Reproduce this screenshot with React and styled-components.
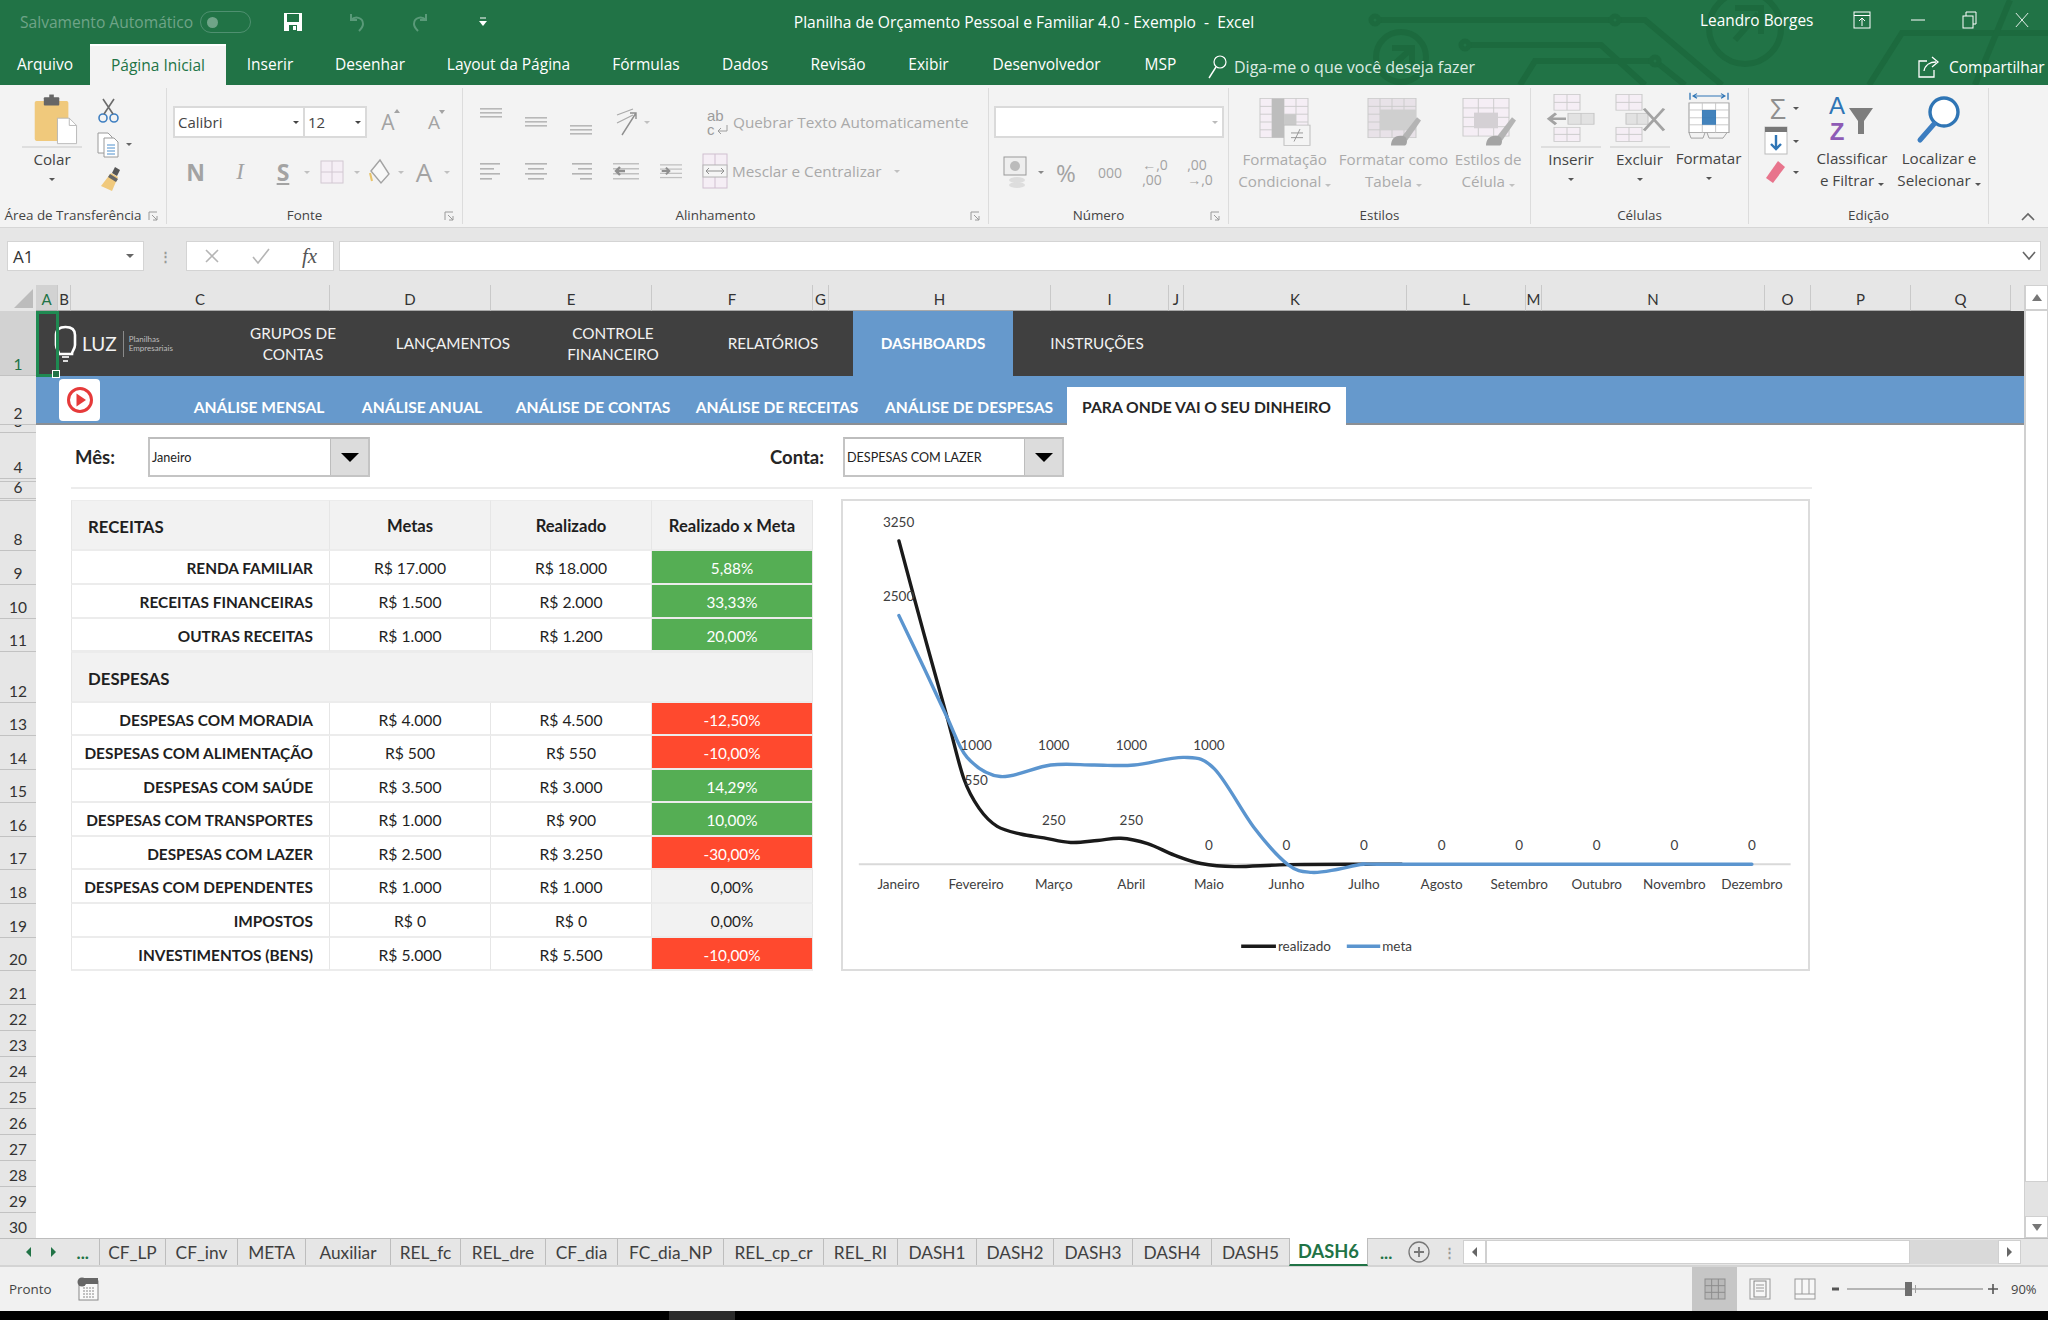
import React from 'react';
import styled, { createGlobalStyle } from 'styled-components';

const GlobalStyle = createGlobalStyle`
  html, body { margin: 0; padding: 0; background: #fff; }
  * { box-sizing: border-box; }
`;

const uiFont = `"Open Sans", "Noto Sans", sans-serif`;
const cellFont = `Lato, "Open Sans", sans-serif`;

const Page = styled.div`
  width: 2048px;
  height: 1320px;
  display: flex;
  flex-direction: column;
  overflow: hidden;
  font-family: ${uiFont};
`;

/* title bar */
const Header = styled.div`
  position: relative;
  background: #217346;
  color: #fff;
`;
const TitleBar = styled.div`
  position: relative;
  height: 44px;
  display: flex;
  align-items: center;
  font-size: 15.6px;
`;
const Circuit = styled.svg`
  position: absolute;
  left: 0;
  top: 0;
  pointer-events: none;
`;
const AutoSave = styled.span`
  margin-left: 20px;
  width: 180px;
  color: #6fa488;
  white-space: nowrap;
`;
const Toggle = styled.span`
  width: 51px;
  height: 22px;
  border: 1.5px solid #4f9070;
  border-radius: 11px;
  display: flex;
  align-items: center;
  padding-left: 6px;
  &::before {
    content: '';
    width: 11px;
    height: 11px;
    border-radius: 50%;
    background: #6fa488;
  }
`;
const QuickSlot = styled.span`
  position: relative;
  width: ${p => p.$w}px;
  margin-left: ${p => p.$ml || 0}px;
  display: flex;
  justify-content: center;
  align-items: center;
`;
const DocTitle = styled.span`
  position: absolute;
  left: 0;
  right: 0;
  top: 11px;
  text-align: center;
  white-space: pre;
`;
const TitleRight = styled.div`
  position: absolute;
  left: 1700px;
  top: 0;
  height: 40px;
  display: flex;
  align-items: center;
  font-size: 15.4px;
`;

/* ribbon tabs */
const TabBar = styled.div`
  position: relative;
  height: 41px;
  display: flex;
  align-items: flex-end;
  font-size: 15.5px;
`;
const RibbonTab = styled.div`
  width: ${p => p.$w}px;
  height: 41px;
  padding-bottom: 2px;
  display: flex;
  align-items: center;
  justify-content: center;
  white-space: nowrap;
  ${p => p.$active && `
    background: #f3f3f3;
    color: #217346;
    border-top: 2px solid #fff;
  `}
`;
const TellMe = styled.div`
  display: flex;
  align-items: center;
  gap: 7px;
  margin-left: 9px;
  color: #dcebe3;
  white-space: nowrap;
  padding-top: 4px;
  height: 41px;
  font-size: 16px;
`;
const Share = styled.div`
  position: absolute;
  left: 1917px;
  top: 0;
  height: 41px;
  display: flex;
  align-items: center;
  gap: 8px;
  padding-top: 4px;
  white-space: nowrap;
`;

/* ribbon */
const Ribbon = styled.div`
  position: relative;
  height: 143px;
  background: #f3f3f3;
  border-bottom: 1px solid #d6d6d6;
  display: flex;
  font-size: 15.2px;
`;
const RibbonGroup = styled.div`
  width: ${p => p.$w}px;
  display: flex;
  flex-direction: column;
  margin-top: 3px;
  margin-bottom: 3px;
  border-right: 1px solid #dcdcdc;
`;
const GroupBody = styled.div`
  height: 116px;
  display: flex;
  flex-direction: ${p => (p.$col ? 'column' : 'row')};
  padding-left: ${p => p.$pl || 0}px;
`;
const GroupLabel = styled.div`
  position: relative;
  flex: 1;
  display: flex;
  align-items: center;
  justify-content: center;
  font-size: 13.4px;
  color: #444;
  white-space: nowrap;
  padding-top: 7px;
  padding-right: ${p => (p.$launcher ? 20 : 0)}px;
`;
const Launcher = styled.svg`
  position: absolute;
  right: 8px;
  bottom: 3px;
`;
const BigButton = styled.div`
  width: ${p => p.$w}px;
  margin-left: ${p => p.$ml || 0}px;
  display: flex;
  flex-direction: column;
  align-items: center;
  padding-top: ${p => p.$pt ?? 5}px;
  color: ${p => (p.$off ? '#ababab' : '#444')};
  line-height: 22px;
  text-align: center;
  white-space: nowrap;
`;
const BigIcon = styled.div`
  height: ${p => p.$h}px;
  flex: none;
  padding-top: ${p => p.$pt || 0}px;
  display: flex;
  align-items: flex-start;
  justify-content: center;
  ${p => p.$line && `
    width: 60px;
    border-bottom: 2px solid #dedede;
  `}
`;
const SmallCol = styled.div`
  width: ${p => p.$w}px;
  margin-left: ${p => p.$ml || 0}px;
  display: flex;
  flex-direction: column;
  align-items: center;
  justify-content: space-between;
  padding: ${p => p.$pad || '8px 0 8px'};
`;
const ToolRow = styled.div`
  display: flex;
  align-items: center;
  height: ${p => p.$h}px;
  margin-top: ${p => p.$mt || 0}px;
  margin-left: ${p => p.$ml || 0}px;
`;
const Slot = styled.div`
  width: ${p => p.$w}px;
  flex: none;
  display: flex;
  align-items: center;
  justify-content: center;
  color: ${p => p.$color || '#a3a3a3'};
  font-family: ${p => (p.$serif ? '"Liberation Serif", serif' : uiFont)};
  font-weight: ${p => (p.$bold ? 700 : 400)};
  font-style: ${p => (p.$italic ? 'italic' : 'normal')};
  font-size: ${p => p.$fs || 14}px;
  text-decoration: ${p => (p.$under ? 'underline' : 'none')};
  line-height: ${p => p.$lh || 'normal'};
`;
const FontStep = styled.span`
  position: relative;
  &::after {
    content: '';
    position: absolute;
    right: -5px;
    top: 1px;
    border-left: 3px solid transparent;
    border-right: 3px solid transparent;
    ${p => (p.$down ? 'border-top: 4px solid #a3a3a3;' : 'border-bottom: 4px solid #a3a3a3;')}
  }
`;
const Combo = styled.div`
  width: ${p => p.$w}px;
  height: 32px;
  background: #fff;
  border: 2px solid #dadada;
  margin-right: -2px;
  display: flex;
  align-items: center;
  justify-content: space-between;
  padding: 0 4px 0 3px;
  color: #444;
  font-size: 15px;
`;
const Caret = styled.span`
  display: inline-block;
  width: 0;
  height: 0;
  border-left: ${p => p.$s || 3}px solid transparent;
  border-right: ${p => p.$s || 3}px solid transparent;
  border-top: ${p => p.$s || 3}px solid ${p => p.$color || '#666'};
  margin-left: ${p => p.$ml || 0}px;
`;
const ButtonCaret = styled(Caret)`
  margin-top: 8px;
`;
const MutedText = styled.span`
  color: #a9a9a9;
  white-space: nowrap;
  margin-left: ${p => p.$ml || 0}px;
  font-size: 15.3px;
`;
const Collapse = styled.svg`
  position: absolute;
  left: 2021px;
  top: 127px;
`;

/* formula bar */
const FormulaBar = styled.div`
  height: 58px;
  background: #e6e6e6;
  display: flex;
  align-items: center;
  padding: 0 7px;
  padding-bottom: 1px;
`;
const NameBox = styled.div`
  width: 137px;
  height: 30px;
  background: #fff;
  border: 1px solid #d4d4d4;
  display: flex;
  align-items: center;
  justify-content: space-between;
  padding: 0 9px 0 5px;
  font-size: 17px;
  color: #333;
`;
const Grip = styled.div`
  width: ${p => p.$w || 42}px;
  display: flex;
  justify-content: center;
  color: #999;
  font-weight: 700;
  font-size: 13px;
`;
const FxBox = styled.div`
  width: 148px;
  height: 30px;
  background: #fff;
  border: 1px solid #d4d4d4;
  display: flex;
  align-items: center;
  margin-right: 5px;
`;
const FormulaInput = styled.div`
  flex: 1;
  height: 30px;
  background: #fff;
  border: 1px solid #d4d4d4;
  display: flex;
  align-items: center;
  justify-content: flex-end;
  padding-right: 3px;
`;

/* sheet */
const Sheet = styled.div`
  height: 953px;
  display: flex;
  background: #e6e6e6;
`;
const SheetMain = styled.div`
  width: 2024px;
  display: flex;
  flex-direction: column;
`;
const ColHeaders = styled.div`
  height: 26px;
  display: flex;
  background: #e6e6e6;
`;
const Corner = styled.div`
  width: 36px;
  height: 26px;
  position: relative;
  &::after {
    content: '';
    position: absolute;
    right: 3px;
    bottom: 3px;
    border-style: solid;
    border-width: 0 0 19px 19px;
    border-color: transparent transparent #bcbcbc transparent;
  }
`;
const ColHead = styled.div`
  width: ${p => p.$w}px;
  border-right: 1px solid #c9c9c9;
  border-bottom: 1px solid #a9a9a9;
  display: flex;
  align-items: flex-end;
  justify-content: center;
  font-family: ${cellFont};
  font-size: 15px;
  line-height: 22px;
  overflow: hidden;
  color: ${p => (p.$sel ? '#217346' : '#333')};
  background: ${p => (p.$sel ? '#d2d2d2' : '#e6e6e6')};
`;
const SheetBody = styled.div`
  flex: 1;
  display: flex;
  min-height: 0;
`;
const RowHeaders = styled.div`
  width: 36px;
  display: flex;
  flex-direction: column;
`;
const RowHead = styled.div`
  height: ${p => p.$h}px;
  flex: none;
  border-bottom: 1px solid #c2c2c2;
  display: flex;
  align-items: flex-end;
  justify-content: center;
  overflow: hidden;
  font-family: ${cellFont};
  font-size: 15.5px;
  line-height: 22px;
  color: ${p => (p.$sel ? '#217346' : '#333')};
  background: ${p => (p.$sel ? '#d2d2d2' : '#e6e6e6')};
`;
const Canvas = styled.div`
  position: relative;
  flex: 1;
  background: #fff;
  display: flex;
  flex-direction: column;
  font-family: ${cellFont};
  overflow: hidden;
`;
const SelectedCell = styled.div`
  position: absolute;
  left: 0;
  top: 0;
  width: 23px;
  height: 66px;
  border: 3px solid #1f8a52;
  z-index: 3;
  &::after {
    content: '';
    position: absolute;
    right: -4px;
    bottom: -4px;
    width: 6px;
    height: 6px;
    background: #217346;
    border: 1px solid #fff;
  }
`;

/* app nav */
const NavBar = styled.div`
  height: 65px;
  flex: none;
  background: #404040;
  display: flex;
  color: #f2f2f2;
`;
const Logo = styled.div`
  width: 177px;
  display: flex;
  align-items: center;
  padding-left: 17px;
`;
const LogoName = styled.span`
  font-size: 19px;
  margin-left: 4px;
  padding-right: 6px;
  border-right: 1px solid #8a8a8a;
  line-height: 26px;
`;
const LogoSub = styled.span`
  font-size: 8px;
  line-height: 9px;
  margin-left: 5px;
  color: #bdbdbd;
`;
const NavItem = styled.div`
  width: ${p => p.$w || 160}px;
  display: flex;
  align-items: center;
  justify-content: center;
  text-align: center;
  font-size: 15.3px;
  line-height: 21px;
  ${p => p.$active && `
    background: #6699cc;
    font-weight: 700;
    color: #fff;
  `}
`;
const SubNav = styled.div`
  height: 49px;
  flex: none;
  background: #6699cc;
  border-bottom: 2px solid #8b8f94;
  display: flex;
`;
const PlayButton = styled.div`
  width: 41px;
  height: 42px;
  margin: 3px 0 0 23px;
  background: #fff;
  border-radius: 4px;
  display: flex;
  align-items: center;
  justify-content: center;
`;
const SubItem = styled.div`
  width: ${p => p.$w}px;
  margin-left: ${p => p.$ml || 0}px;
  display: flex;
  align-items: center;
  justify-content: center;
  padding-top: 14px;
  font-size: 15.6px;
  font-weight: 700;
  color: #fff;
  white-space: nowrap;
`;
const SubTabActive = styled.div`
  width: 279px;
  height: 38px;
  margin-top: 11px;
  padding-top: 2px;
  background: #fff;
  color: #262626;
  font-size: 15.7px;
  font-weight: 700;
  display: flex;
  align-items: center;
  justify-content: center;
  white-space: nowrap;
`;

/* filter */
const FilterRow = styled.div`
  height: 64px;
  flex: none;
  width: 1741px;
  margin-left: 35px;
  border-bottom: 2px solid #ececec;
  display: flex;
  align-items: center;
  padding: 2px 0 0 4px;
`;
const FilterLabel = styled.span`
  width: ${p => p.$w}px;
  margin-left: ${p => p.$ml || 0}px;
  font-size: 18.5px;
  font-weight: 700;
  color: #262626;
`;
const Dropdown = styled.div`
  width: ${p => p.$w}px;
  height: 40px;
  border: 2px solid #c4c4c4;
  border-top-color: #bdbdbd;
  display: flex;
  align-items: stretch;
  background: #fff;
`;
const DropValue = styled.span`
  flex: 1;
  display: flex;
  align-items: center;
  padding-left: 2px;
  font-size: 12.6px;
  color: #222;
  white-space: nowrap;
`;
const DropButton = styled.span`
  width: 38px;
  background: #dcdcdc;
  border-left: 1px solid #bdbdbd;
  display: flex;
  align-items: center;
  justify-content: center;
`;

/* dashboard */
const Content = styled.div`
  display: flex;
  align-items: flex-start;
  margin: 11px 0 0 35px;
  gap: 28px;
`;
const ResultTable = styled.div`
  width: 742px;
  flex: none;
  display: grid;
  grid-template-columns: 259px 161px 161px 161px;
  grid-template-rows: 51px 34px 34px 33px 51px 33px 34px 33px 34px 33px 34px 34px 33px;
  font-size: 15.7px;
  color: #1f1f1f;
`;
const Cell = styled.div`
  display: flex;
  align-items: center;
  justify-content: center;
  padding-top: 2px;
  border-bottom: 2px solid #ececec;
  border-right: 1px solid #e6e6e6;
  white-space: nowrap;
`;
const HeadCell = styled(Cell)`
  background: #f2f2f2;
  font-weight: 700;
  font-size: 16.6px;
  border-top: 1px solid #ececec;
`;
const SectionCell = styled(HeadCell)`
  justify-content: flex-start;
  padding: 3px 0 0 16px;
  font-size: 16.8px;
  grid-column: span ${p => p.$span || 1};
  border-left: 1px solid #e6e6e6;
`;
const RowLabel = styled(Cell)`
  justify-content: flex-end;
  padding-right: 16px;
  font-weight: 700;
  font-size: 15.4px;
  border-left: 1px solid #e6e6e6;
`;
const statusBg = { up: '#55ae54', down: '#ff492e', flat: '#f2f2f2' };
const StatusCell = styled(Cell)`
  background: ${p => statusBg[p.$kind]};
  color: ${p => (p.$kind === 'flat' ? '#1f1f1f' : '#fff')};
  font-size: 15.3px;
`;
const ChartBox = styled.div`
  width: 969px;
  height: 472px;
  margin-top: -1px;
  flex: none;
  background: #fff;
  border: 2px solid #dcdcdc;
`;
const ChartText = styled.text`
  font-family: ${cellFont};
  font-size: 13.5px;
  fill: #404040;
  text-anchor: ${p => p.$anchor || 'middle'};
`;

/* vertical scrollbar */
const VScroll = styled.div`
  width: 24px;
  background: #e3e3e3;
  display: flex;
  flex-direction: column;
  border-left: 1px solid #d0d0d0;
`;
const ScrollBtn = styled.div`
  height: ${p => p.$h}px;
  flex: none;
  background: #fff;
  border: 1px solid #d0d0d0;
  display: flex;
  align-items: center;
  justify-content: center;
  ${p => p.$end && 'margin-top: auto;'}
`;
const ScrollArrow = styled.span`
  width: 0;
  height: 0;
  border-left: 5px solid transparent;
  border-right: 5px solid transparent;
  ${p => (p.$up ? 'border-bottom: 7px solid #777;' : 'border-top: 7px solid #777;')}
`;

/* sheet tabs */
const TabsRow = styled.div`
  height: 29px;
  background: #e6e6e6;
  border-top: 1px solid #bdbdbd;
  border-bottom: 2px solid #d4d4d4;
  display: flex;
  align-items: center;
  font-family: ${cellFont};
  font-size: 17.3px;
  color: #404040;
`;
const TabNav = styled.div`
  width: 99px;
  display: flex;
  align-items: center;
  justify-content: space-around;
  padding: 0 0 0 16px;
  color: #217346;
  font-weight: 700;
`;
const SheetTab = styled.div`
  width: ${p => p.$w}px;
  height: 26px;
  display: flex;
  align-items: center;
  justify-content: center;
  white-space: nowrap;
  border-left: 1px solid #bdbdbd;
  ${p => p.$active && `
    height: 28px;
    background: #fff;
    color: #217346;
    font-weight: 700;
    font-size: 18.3px;
    border-bottom: 2px solid #217346;
    border-left: 1px solid #bdbdbd;
    border-right: 1px solid #bdbdbd;
  `}
`;
const AddRow = styled.div`
  width: 95px;
  display: flex;
  align-items: center;
  color: #217346;
  font-weight: 700;
  padding-left: 12px;
  gap: 16px;
`;
const HScroll = styled.div`
  width: 558px;
  height: 24px;
  display: flex;
  background: #d9d9d9;
`;
const HBtn = styled.div`
  width: 23px;
  background: #fff;
  border: 1px solid #d0d0d0;
  display: flex;
  align-items: center;
  justify-content: center;
  ${p => p.$end && 'margin-left: auto;'}
`;
const HThumb = styled.div`
  width: 424px;
  background: #fff;
  border: 1px solid #d0d0d0;
`;
const SideArrow = styled.span`
  width: 0;
  height: 0;
  border-top: 5px solid transparent;
  border-bottom: 5px solid transparent;
  ${p => (p.$left
    ? `border-right: 5px solid ${p.$color || '#666'};`
    : `border-left: 5px solid ${p.$color || '#666'};`)}
`;

/* status bar */
const StatusBar = styled.div`
  height: 44px;
  background: #f1f1f1;
  display: flex;
  align-items: center;
  font-size: 13.4px;
  color: #444;
`;
const Ready = styled.span`
  margin-left: 9px;
  width: 68px;
`;
const ViewBtn = styled.div`
  width: 45px;
  height: 44px;
  display: flex;
  align-items: center;
  justify-content: center;
  background: ${p => (p.$active ? '#c6c6c6' : 'transparent')};
`;
const ViewGroup = styled.div`
  margin-left: auto;
  display: flex;
  align-items: center;
`;
const ZoomSlider = styled.div`
  position: relative;
  width: 136px;
  height: 2px;
  background: #b5b5b5;
  margin: 0 4px;
  &::before {
    content: '';
    position: absolute;
    left: 58px;
    top: -6px;
    width: 7px;
    height: 14px;
    background: #6e6e6e;
  }
  &::after {
    content: '';
    position: absolute;
    left: 68px;
    top: -3px;
    width: 1px;
    height: 8px;
    background: #a0a0a0;
  }
`;
const ZoomPct = styled.span`
  width: 29px;
  margin: 0 8px 0 12px;
  font-size: 13px;
  white-space: nowrap;
`;
const BottomBar = styled.div`
  height: 9px;
  background: #000;
  padding-left: 669px;
  &::before {
    content: '';
    display: block;
    width: 66px;
    height: 9px;
    background: #2b2b2b;
  }
`;

/* small drawings */
const Svg = ({ w, h, children, ...rest }) => (
  <svg width={w} height={h} viewBox={`0 0 ${w} ${h}`} fill="none" {...rest}>{children}</svg>
);

const gridIcon = (x, y, w, h, cols, rows, stroke = '#c9c9c9', fill = '#f5eef5') => {
  const lines = [];
  for (let i = 1; i < cols; i++) lines.push(<path key={`c${i}`} d={`M${x + (w / cols) * i} ${y}v${h}`} stroke={stroke} />);
  for (let i = 1; i < rows; i++) lines.push(<path key={`r${i}`} d={`M${x} ${y + (h / rows) * i}h${w}`} stroke={stroke} />);
  return (
    <g>
      <rect x={x} y={y} width={w} height={h} fill={fill} stroke={stroke} />
      {lines}
    </g>
  );
};

const AlignLines = ({ type = 'center', widths = [20, 20, 20, 20] }) => (
  <Svg w={22} h={18}>
    {widths.map((lw, i) => {
      const x = type === 'left' ? 0 : type === 'right' ? 22 - lw : (22 - lw) / 2;
      return <rect key={i} x={x} y={i * 5 + 1} width={lw} height={1.6} fill="#b4b4b4" />;
    })}
  </Svg>
);

const StackLines = ({ cy }) => (
  <Svg w={22} h={30}>
    {[-4, 0, 4].map(y => <rect key={y} x={0} y={cy + y} width={22} height={1.6} fill="#b8b8b8" />)}
  </Svg>
);

const Indent = ({ right }) => (
  <Svg w={26} h={18}>
    {[1, 6, 11, 16].map(y => <rect key={y} x={0} y={y} width={26} height={1.5} fill="#c0c0c0" />)}
    <path d={right ? 'M2 9h8M7 5l4 4-4 4' : 'M12 9H3M7 5L3 9l4 4'} stroke="#8f8f8f" strokeWidth="2.4" />
  </Svg>
);

const PasteIcon = () => (
  <Svg w={66} h={56} height={52}>
    <g transform="translate(12 0)">
      <rect x={2} y={7} width={37} height={44} rx={2} fill="#f0c97c" />
      <rect x={12} y={3} width={17} height={9} rx={1} fill="#666" />
      <rect x={18} y={0} width={5} height={6} fill="#666" />
      <path d="M27 26h13l8 8v20H27z" fill="#fff" stroke="#b5b5b5" />
      <path d="M40 26v8h8" stroke="#b5b5b5" />
    </g>
  </Svg>
);

const ScissorsIcon = () => (
  <Svg w={24} h={26}>
    <circle cx={6} cy={20} r={4} stroke="#3f7fc1" strokeWidth="1.6" />
    <circle cx={17} cy={20} r={4} stroke="#3f7fc1" strokeWidth="1.6" />
    <path d="M7 16L17 1M16 16L6 1" stroke="#6b6b6b" strokeWidth="1.6" />
  </Svg>
);

const CopyIcon = () => (
  <Svg w={24} h={26}>
    <path d="M2 1h10l4 4v16H2z" fill="#fff" stroke="#9a9a9a" />
    <path d="M8 6h10l4 4v15H8z" fill="#fff" stroke="#9a9a9a" />
    {[13, 16, 19, 22].map(y => <path key={y} d={`M11 ${y}h8`} stroke="#4f90cd" />)}
  </Svg>
);

const BrushIcon = () => (
  <Svg w={24} h={28}>
    <path d="M14 8l7 4-6 14-11-5z" fill="#f0c97c" />
    <path d="M15 8l3-6 5 3-3 6z" fill="#555" />
    <path d="M13 9l8 5-2 3-8-5z" fill="#666" />
  </Svg>
);

const CondFormatIcon = () => (
  <Svg w={54} h={64} height={50} preserveAspectRatio="none">
    {gridIcon(2, 2, 48, 50, 4, 5)}
    <rect x={14} y={2} width={12} height={50} fill="#bdbdbd" />
    <rect x={26} y={22} width={12} height={20} fill="#c9c9c9" />
    <rect x={26} y={36} width={26} height={26} fill="#f4f4f4" stroke="#bdbdbd" />
    <path d="M33 46h12M33 52h12M42 41l-6 16" stroke="#8f8f8f" />
  </Svg>
);

const TableFormatIcon = ({ small }) => (
  <Svg w={56} h={64} height={50} preserveAspectRatio="none">
    {small
      ? gridIcon(3, 2, 46, 48, 3, 4)
      : gridIcon(3, 2, 48, 50, 4, 5, '#c9c9c9', '#e8e2e8')}
    {small
      ? <rect x={14} y={20} width={24} height={20} fill="#d4d0d4" />
      : <rect x={15} y={16} width={36} height={26} fill="#cfcfcf" />}
    <path d="M52 26L36 52l6 4 14-26z" fill="#b4b4b4" />
    <path d="M26 62c0-8 4-14 12-12 6 2 4 12 2 12z" fill="#a4a4a4" />
  </Svg>
);

const InsertCells = () => (
  <Svg w={50} h={64} height={50} preserveAspectRatio="none">
    {gridIcon(8, 2, 26, 20, 2, 2)}
    {gridIcon(8, 44, 26, 18, 2, 2)}
    {gridIcon(22, 26, 26, 14, 2, 1, '#c4c4c4', '#e2e2e2')}
    <path d="M20 33H3M10 26l-7 7 7 7" stroke="#a3a3a3" strokeWidth="3.2" />
  </Svg>
);

const DeleteCells = () => (
  <Svg w={56} h={64} height={50} preserveAspectRatio="none">
    {gridIcon(4, 2, 26, 20, 2, 2)}
    {gridIcon(4, 44, 26, 18, 2, 2)}
    {gridIcon(14, 26, 22, 14, 2, 1, '#c4c4c4', '#e2e2e2')}
    <path d="M32 20l20 28M52 20L32 48" stroke="#a3a3a3" strokeWidth="3" />
  </Svg>
);

const FormatCells = () => (
  <Svg w={48} h={64} height={50} preserveAspectRatio="none">
    <path d="M5 1v9M43 1v9M8 5h32M12 2L8 5l4 3M36 2l4 3-4 3" stroke="#2f75b5" strokeWidth="1.3" />
    <rect x={4} y={14} width={40} height={38} fill="#fff" stroke="#9a9a9a" />
    {[17.3, 30.6].map(x => <path key={x} d={`M${x} 14v38`} stroke="#c4c4c4" />)}
    {[23, 33, 42].map(y => <path key={y} d={`M4 ${y}h40`} stroke="#c4c4c4" />)}
    <rect x={17} y={23} width={14} height={19} fill="#2f75b5" opacity="0.9" />
    <path d="M4 52l2 7h12l2-7M22 52l2 7h14l4-7" stroke="#9a9a9a" />
  </Svg>
);

const SortIcon = () => (
  <Svg w={50} h={50}>
    <text x={10} y={20} fontSize="24" fill="#2f75b5" fontFamily="Liberation Sans" textAnchor="middle">A</text>
    <text x={10} y={46} fontSize="24" fontWeight="700" fill="#8e5bb5" fontFamily="Liberation Sans" textAnchor="middle">Z</text>
    <path d="M22 14h24l-9 13v13h-6V27z" fill="#7d7d7d" />
  </Svg>
);

const FindIcon = () => (
  <Svg w={50} h={50}>
    <circle cx={30} cy={18} r={14} fill="#fff" stroke="#2f75b5" strokeWidth="3.4" />
    <path d="M20 30L6 46" stroke="#3b7dc0" strokeWidth="5" strokeLinecap="round" />
  </Svg>
);

const chartMapX = px => px / 1.496 - 43;
const chartMapY = py => py / 2.61 - 121;

const smoothPath = pts => {
  const p = pts.map(([x, y]) => [chartMapX(x), chartMapY(y)]);
  let d = `M${p[0][0]} ${p[0][1]}`;
  for (let i = 0; i < p.length - 1; i++) {
    const p0 = p[i - 1] || p[i];
    const p1 = p[i];
    const p2 = p[i + 1];
    const p3 = p[i + 2] || p2;
    const c1 = [p1[0] + (p2[0] - p0[0]) / 6, p1[1] + (p2[1] - p0[1]) / 6];
    const c2 = [p2[0] - (p3[0] - p1[0]) / 6, p2[1] - (p3[1] - p1[1]) / 6];
    d += ` C${c1[0]} ${c1[1]} ${c2[0]} ${c2[1]} ${p2[0]} ${p2[1]}`;
  }
  return d;
};

const realizadoLine = [[148, 420], [185, 660], [220, 880], [245, 1040], [268, 1118], [295, 1165], [330, 1185], [365, 1195], [405, 1207], [445, 1202], [480, 1196], [520, 1210], [560, 1240], [600, 1262], [650, 1270], [730, 1265], [843, 1264], [900, 1264]];
const metaLine = [[148, 615], [185, 750], [220, 880], [250, 985], [300, 1035], [375, 1005], [440, 1005], [500, 1005], [575, 985], [620, 1015], [680, 1170], [730, 1265], [765, 1285], [805, 1277], [843, 1264], [900, 1264], [1424, 1264]];

const months = ['Janeiro', 'Fevereiro', 'Março', 'Abril', 'Maio', 'Junho', 'Julho', 'Agosto', 'Setembro', 'Outubro', 'Novembro', 'Dezembro'];
const monthX = i => 147.5 + i * 116.05;

const valueLabels = [
  ['3250', 0, 371], ['2500', 0, 565], ['1000', 1, 953], ['1000', 2, 953], ['1000', 3, 953], ['1000', 4, 953],
  ['550', 1, 1045], ['250', 2, 1148], ['250', 3, 1148],
  ...[4, 5, 6, 7, 8, 9, 10, 11].map(i => ['0', i, 1213]),
];

const Chart = () => (
  <svg width="965" height="468" viewBox="0 0 965 468">
    <path d={`M${chartMapX(88)} ${chartMapY(1264)}H${chartMapX(1482)}`} stroke="#d9d9d9" strokeWidth="2" />
    <path d={smoothPath(realizadoLine)} stroke="#1a1a1a" strokeWidth="3.4" strokeLinecap="round" fill="none" />
    <path d={smoothPath(metaLine)} stroke="#5b95cf" strokeWidth="3.4" strokeLinecap="round" fill="none" />
    {valueLabels.map(([text, i, y], k) => (
      <ChartText key={k} x={chartMapX(monthX(i))} y={chartMapY(y) + 5}>{text}</ChartText>
    ))}
    {months.map((m, i) => (
      <ChartText key={m} x={chartMapX(monthX(i))} y={chartMapY(1315) + 5}>{m}</ChartText>
    ))}
    <path d={`M${chartMapX(660)} ${chartMapY(1478)}H${chartMapX(712)}`} stroke="#1a1a1a" strokeWidth="3.4" />
    <ChartText $anchor="start" x={chartMapX(715)} y={chartMapY(1478) + 5}>realizado</ChartText>
    <path d={`M${chartMapX(818)} ${chartMapY(1478)}H${chartMapX(868)}`} stroke="#5b95cf" strokeWidth="3.4" />
    <ChartText $anchor="start" x={chartMapX(871)} y={chartMapY(1478) + 5}>meta</ChartText>
  </svg>
);

const columns = [
  ['A', 22], ['B', 13], ['C', 259], ['D', 161], ['E', 161], ['F', 161], ['G', 16], ['H', 222], ['I', 118],
  ['J', 15], ['K', 223], ['L', 119], ['M', 16], ['N', 223], ['O', 46], ['P', 100], ['Q', 100],
];
const rowHeights = [
  65, 49, 8, 46, 3, 17, 2, 50, 34, 34, 33, 51, 33, 34, 33, 34, 33, 34, 34, 33, 34, 26, 26, 26, 26, 26, 26, 26, 26, 26,
];

const receitas = [
  ['RENDA FAMILIAR', 'R$ 17.000', 'R$ 18.000', '5,88%', 'up'],
  ['RECEITAS FINANCEIRAS', 'R$ 1.500', 'R$ 2.000', '33,33%', 'up'],
  ['OUTRAS RECEITAS', 'R$ 1.000', 'R$ 1.200', '20,00%', 'up'],
];
const despesas = [
  ['DESPESAS COM MORADIA', 'R$ 4.000', 'R$ 4.500', '-12,50%', 'down'],
  ['DESPESAS COM ALIMENTAÇÃO', 'R$ 500', 'R$ 550', '-10,00%', 'down'],
  ['DESPESAS COM SAÚDE', 'R$ 3.500', 'R$ 3.000', '14,29%', 'up'],
  ['DESPESAS COM TRANSPORTES', 'R$ 1.000', 'R$ 900', '10,00%', 'up'],
  ['DESPESAS COM LAZER', 'R$ 2.500', 'R$ 3.250', '-30,00%', 'down'],
  ['DESPESAS COM DEPENDENTES', 'R$ 1.000', 'R$ 1.000', '0,00%', 'flat'],
  ['IMPOSTOS', 'R$ 0', 'R$ 0', '0,00%', 'flat'],
  ['INVESTIMENTOS (BENS)', 'R$ 5.000', 'R$ 5.500', '-10,00%', 'down'],
];

const ribbonTabs = [
  ['Arquivo', 90], ['Página Inicial', 136], ['Inserir', 88], ['Desenhar', 112], ['Layout da Página', 165],
  ['Fórmulas', 110], ['Dados', 88], ['Revisão', 98], ['Exibir', 83], ['Desenvolvedor', 153], ['MSP', 75],
];
const sheetTabs = [
  ['CF_LP', 66], ['CF_inv', 72], ['META', 68], ['Auxiliar', 85], ['REL_fc', 70], ['REL_dre', 85], ['CF_dia', 72],
  ['FC_dia_NP', 106], ['REL_cp_cr', 100], ['REL_RI', 74], ['DASH1', 79], ['DASH2', 77], ['DASH3', 79], ['DASH4', 79], ['DASH5', 78],
];

const DataRows = ({ rows }) => rows.map(([name, meta, real, pct, kind]) => (
  <React.Fragment key={name}>
    <RowLabel>{name}</RowLabel>
    <Cell>{meta}</Cell>
    <Cell>{real}</Cell>
    <StatusCell $kind={kind}>{pct}</StatusCell>
  </React.Fragment>
));

const LauncherMark = () => (
  <Launcher width="10" height="10" viewBox="0 0 10 10" fill="none">
    <path d="M1 9V1h8M4 4l5 5M9 5v4H5" stroke="#9a9a9a" />
  </Launcher>
);

export default function App() {
  return (
    <Page>
      <GlobalStyle />
      <Header>
        <Circuit width="2048" height="85" viewBox="0 0 2048 85" fill="none">
          <g stroke="#1c6a3e" strokeWidth="6">
            <path d="M1375 20H1645L1722 85" />
            <path d="M1465 45H1601L1645 85" />
            <path d="M1520 85L1535 61H1655L1685 85" />
            <circle cx="1401" cy="57" r="25" />
            <path d="M1390 68L1410 50M1392 48h20v20" />
            <circle cx="1745" cy="28" r="36" />
            <path d="M1735 40L1758 14M1735 8h26v26" />
            <path d="M1869 85L1902 33H2048" />
            <path d="M1975 85L2010 0" />
          </g>
          <g fill="#217346" stroke="#1c6a3e" strokeWidth="5">
            <circle cx="1375" cy="20" r="4" />
            <circle cx="1615" cy="20" r="4" />
            <circle cx="1465" cy="45" r="4" />
            <circle cx="1655" cy="61" r="4" />
          </g>
        </Circuit>
        <TitleBar>
          <AutoSave>Salvamento Automático</AutoSave>
          <Toggle />
          <QuickSlot $w={84}>
            <Svg w={20} h={20}>
              <path d="M1 1h18v18H1z" fill="#fff" />
              <rect x={4} y={2} width={12} height={8} fill="#217346" />
              <rect x={6} y={13} width={8} height={6} fill="#217346" />
              <rect x={10} y={14} width={3} height={4} fill="#fff" />
            </Svg>
          </QuickSlot>
          <QuickSlot $w={43}>
            <Svg w={20} h={22}>
              <path d="M4 3v6h6M4 9c4-4 12-3 12 4 0 3-2 5-4 7" stroke="#5a9a79" strokeWidth="2" />
            </Svg>
          </QuickSlot>
          <QuickSlot $w={84}>
            <Svg w={20} h={22}>
              <path d="M16 3v6h-6M16 9c-4-4-12-3-12 4 0 3 2 5 4 7" stroke="#5a9a79" strokeWidth="2" />
            </Svg>
          </QuickSlot>
          <QuickSlot $w={42}>
            <Svg w={10} h={10}>
              <path d="M2 1h6" stroke="#fff" />
              <path d="M1 4h8L5 9z" fill="#fff" />
            </Svg>
          </QuickSlot>
          <DocTitle>Planilha de Orçamento Pessoal e Familiar 4.0 - Exemplo  -  Excel</DocTitle>
          <TitleRight>
            Leandro Borges
            <QuickSlot $w={98}>
              <Svg w={18} h={18}>
                <rect x={1} y={1} width={16} height={16} stroke="#fff" />
                <path d="M1 4.5h16M9 15V8M6 10l3-3 3 3" stroke="#fff" />
              </Svg>
            </QuickSlot>
            <QuickSlot $w={14}>
              <Svg w={14} h={14}><path d="M0 7h14" stroke="#fff" /></Svg>
            </QuickSlot>
            <QuickSlot $w={90}>
              <Svg w={16} h={18}>
                <rect x={1} y={5} width={10} height={12} stroke="#fff" />
                <path d="M4 5V1h10v12h-3" stroke="#fff" />
              </Svg>
            </QuickSlot>
            <QuickSlot $w={14}>
              <Svg w={16} h={18}><path d="M1 1l14 16M15 1L1 17" stroke="#fff" /></Svg>
            </QuickSlot>
          </TitleRight>
        </TitleBar>

        <TabBar>
          {ribbonTabs.map(([label, w], i) => (
            <RibbonTab key={label} $w={w} $active={i === 1}>{label}</RibbonTab>
          ))}
          <TellMe>
            <Svg w={20} h={24}>
              <circle cx={13} cy={7} r={6} stroke="#fff" strokeWidth="1.2" />
              <path d="M9 12L2 23" stroke="#fff" strokeWidth="1.4" />
            </Svg>
            Diga-me o que você deseja fazer
          </TellMe>
          <Share>
            <Svg w={24} h={24}>
              <path d="M10 6H2v16h15v-7" stroke="#fff" strokeWidth="1.3" />
              <path d="M7 16c1-6 6-9 12-9M15 2l6 5-6 5" stroke="#fff" strokeWidth="1.3" />
            </Svg>
            Compartilhar
          </Share>
        </TabBar>
      </Header>

      <Ribbon>
        <RibbonGroup $w={167}>
          <GroupBody>
            <BigButton $w={78} $ml={13} $pt={6}>
              <BigIcon $h={54} $line><PasteIcon /></BigIcon>
              Colar
              <ButtonCaret $color="#555" />
            </BigButton>
            <SmallCol $w={36} $pad="10px 0 6px">
              <ScissorsIcon />
              <ToolRow $h={30} $ml={10}><CopyIcon /><Caret $ml={6} /></ToolRow>
              <BrushIcon />
            </SmallCol>
          </GroupBody>
          <GroupLabel $launcher>
            Área de Transferência
            <LauncherMark />
          </GroupLabel>
        </RibbonGroup>

        <RibbonGroup $w={296}>
          <GroupBody $col $pl={6}>
            <ToolRow $h={32} $mt={18}>
              <Combo $w={132}>Calibri<Caret $color="#444" /></Combo>
              <Combo $w={64}>12<Caret $color="#444" /></Combo>
              <Slot $w={46} $fs={21}><FontStep>A</FontStep></Slot>
              <Slot $w={46} $fs={19}><FontStep $down>A</FontStep></Slot>
            </ToolRow>
            <ToolRow $h={40} $mt={14}>
              <Slot $w={45} $fs={23} $bold>N</Slot>
              <Slot $w={44} $fs={23} $italic $serif>I</Slot>
              <Slot $w={42} $fs={23} $bold $under>S</Slot>
              <Caret $color="#c0c0c0" />
              <Slot $w={44}>
                <Svg w={24} h={24}>{gridIcon(1, 1, 22, 22, 2, 2, '#d2c8d2')}</Svg>
              </Slot>
              <Caret $color="#c0c0c0" />
              <Slot $w={38}>
                <Svg w={24} h={30}>
                  <path d="M4 14L13 3l9 14-8 9z" stroke="#a3a3a3" strokeWidth="1.4" fill="#f8f8f8" />
                  <path d="M3 16l2 8" stroke="#e9c46a" strokeWidth="2" />
                </Svg>
              </Slot>
              <Caret $color="#c0c0c0" />
              <Slot $w={40} $fs={26}>A</Slot>
              <Caret $color="#c0c0c0" />
            </ToolRow>
          </GroupBody>
          <GroupLabel $launcher>Fonte<LauncherMark /></GroupLabel>
        </RibbonGroup>

        <RibbonGroup $w={526}>
          <GroupBody $col $pl={17}>
            <ToolRow $h={40} $mt={14}>
              <Slot $w={22}><StackLines cy={5} /></Slot>
              <Slot $w={68}><StackLines cy={14} /></Slot>
              <Slot $w={22}><StackLines cy={22} /></Slot>
              <Slot $w={80}>
                <Svg w={30} h={30}>
                  <path d="M3 8l16-6M3 16L19 8" stroke="#a9a9a9" strokeWidth="1.2" />
                  <path d="M8 28L22 6M16 6h6v6" stroke="#8f8f8f" strokeWidth="1.4" />
                </Svg>
                <Caret $color="#c0c0c0" />
              </Slot>
              <Slot $w={35} />
              <Svg w={22} h={30}>
                <text x={0} y={14} fontSize="15" fill="#9c9c9c" fontFamily="Liberation Sans">ab</text>
                <text x={0} y={28} fontSize="15" fill="#9c9c9c" fontFamily="Liberation Sans">c</text>
                <path d="M20 18v6H11M14 21l-3 3 3 3" stroke="#9c9c9c" />
              </Svg>
              <MutedText $ml={4}>Quebrar Texto Automaticamente</MutedText>
            </ToolRow>
            <ToolRow $h={34} $mt={12}>
              <Slot $w={22}><AlignLines type="left" widths={[20, 14, 20, 12]} /></Slot>
              <Slot $w={68}><AlignLines widths={[22, 16, 22, 16]} /></Slot>
              <Slot $w={22}><AlignLines type="right" widths={[20, 14, 20, 12]} /></Slot>
              <Slot $w={68}><Indent /></Slot>
              <Slot $w={22}><Indent right /></Slot>
              <Slot $w={20} />
              <Svg w={26} h={36}>
                {gridIcon(1, 1, 24, 34, 2, 3, '#d0bfd0')}
                <rect x={1} y={12} width={24} height={12} fill="#f5f5f5" stroke="#b5b5b5" />
                <path d="M4 18h18M7 15l-3 3 3 3M19 15l3 3-3 3" stroke="#8f8f8f" />
              </Svg>
              <MutedText $ml={4}>Mesclar e Centralizar</MutedText>
              <Caret $ml={12} $color="#c0c0c0" />
            </ToolRow>
          </GroupBody>
          <GroupLabel $launcher>Alinhamento<LauncherMark /></GroupLabel>
        </RibbonGroup>

        <RibbonGroup $w={240}>
          <GroupBody $col $pl={5}>
            <ToolRow $h={32} $mt={18}>
              <Combo $w={230}><span /><Caret $color="#bbb" /></Combo>
            </ToolRow>
            <ToolRow $h={40} $mt={14}>
              <Slot $w={44}>
                <Svg w={26} h={32}>
                  <rect x={1} y={1} width={22} height={18} fill="#eee" stroke="#999" />
                  <circle cx={12} cy={10} r={5} fill="#bbb" />
                  <ellipse cx={14} cy={24} rx={8} ry={3} fill="#ddd" />
                  <ellipse cx={14} cy={29} rx={8} ry={3} fill="#ddd" />
                </Svg>
              </Slot>
              <Caret $color="#888" />
              <Slot $w={44} $fs={24}>%</Slot>
              <Slot $w={44} $fs={14}>000</Slot>
              <Slot $w={46} $fs={14} $lh="15px">
                <span>←,0<br />,00</span>
              </Slot>
              <Slot $w={44} $fs={14} $lh="15px">
                <span>,00<br />→,0</span>
              </Slot>
            </ToolRow>
          </GroupBody>
          <GroupLabel $launcher>Número<LauncherMark /></GroupLabel>
        </RibbonGroup>

        <RibbonGroup $w={302}>
          <GroupBody>
            <BigButton $off $w={112}>
              <BigIcon $h={55} $pt={4}><CondFormatIcon /></BigIcon>
              Formatação
              <span>Condicional <Caret $color="#c0c0c0" /></span>
            </BigButton>
            <BigButton $off $w={106}>
              <BigIcon $h={55} $pt={4}><TableFormatIcon /></BigIcon>
              Formatar como
              <span>Tabela <Caret $color="#c0c0c0" /></span>
            </BigButton>
            <BigButton $off $w={84}>
              <BigIcon $h={55} $pt={4}><TableFormatIcon small /></BigIcon>
              Estilos de
              <span>Célula <Caret $color="#c0c0c0" /></span>
            </BigButton>
          </GroupBody>
          <GroupLabel>Estilos</GroupLabel>
        </RibbonGroup>

        <RibbonGroup $w={218}>
          <GroupBody $pl={6}>
            <BigButton $w={68}>
              <BigIcon $h={55} $line><InsertCells /></BigIcon>
              Inserir
              <ButtonCaret $color="#555" />
            </BigButton>
            <BigButton $w={69}>
              <BigIcon $h={55} $line><DeleteCells /></BigIcon>
              Excluir
              <ButtonCaret $color="#555" />
            </BigButton>
            <BigButton $w={69} $pt={4}>
              <BigIcon $h={55}><FormatCells /></BigIcon>
              Formatar
              <ButtonCaret $color="#555" />
            </BigButton>
          </GroupBody>
          <GroupLabel>Células</GroupLabel>
        </RibbonGroup>

        <RibbonGroup $w={240}>
          <GroupBody>
            <SmallCol $w={52} $ml={6} $pad="5px 0 14px">
              <ToolRow $h={30}>
                <Slot $w={30} $fs={28} $color="#8f8f8f">Σ</Slot>
                <Caret $color="#555" />
              </ToolRow>
              <ToolRow $h={30}>
                <Svg w={26} h={30}>
                  <rect x={2} y={1} width={22} height={27} fill="#fff" stroke="#bbb" />
                  <rect x={2} y={1} width={22} height={5} fill="#777" />
                  <path d="M13 9v14M8 18l5 5 5-5" stroke="#2f75b5" strokeWidth="2.4" />
                </Svg>
                <Caret $ml={4} $color="#555" />
              </ToolRow>
              <ToolRow $h={26}>
                <Svg w={26} h={24}>
                  <path d="M15 1l7 6-12 16-7-5z" fill="#e8748c" />
                </Svg>
                <Caret $ml={4} $color="#555" />
              </ToolRow>
            </SmallCol>
            <BigButton $w={90} $pt={6}>
              <BigIcon $h={53}><SortIcon /></BigIcon>
              Classificar
              <span>e Filtrar <Caret $color="#555" /></span>
            </BigButton>
            <BigButton $w={84} $pt={6}>
              <BigIcon $h={53}><FindIcon /></BigIcon>
              Localizar e
              <span>Selecionar <Caret $color="#555" /></span>
            </BigButton>
          </GroupBody>
          <GroupLabel>Edição</GroupLabel>
        </RibbonGroup>
        <Collapse width="14" height="10" viewBox="0 0 14 10" fill="none">
          <path d="M1 8l6-6 6 6" stroke="#666" strokeWidth="1.6" />
        </Collapse>
      </Ribbon>

      <FormulaBar>
        <NameBox>A1<Caret $s={4} $color="#666" /></NameBox>
        <Grip>⋮</Grip>
        <FxBox>
          <Slot $w={49}><Svg w={18} h={18}><path d="M3 3l12 12M15 3L3 15" stroke="#b5b5b5" strokeWidth="1.6" /></Svg></Slot>
          <Slot $w={49}><Svg w={20} h={18}><path d="M2 10l5 6L18 2" stroke="#b5b5b5" strokeWidth="1.6" /></Svg></Slot>
          <Slot $w={49} $fs={21} $serif $italic $color="#555">fx</Slot>
        </FxBox>
        <FormulaInput>
          <Svg w={16} h={12}><path d="M2 2l6 7 6-7" stroke="#666" strokeWidth="1.6" /></Svg>
        </FormulaInput>
      </FormulaBar>

      <Sheet>
        <SheetMain>
          <ColHeaders>
            <Corner />
            {columns.map(([name, w], i) => (
              <ColHead key={name} $w={w} $sel={i === 0}>{name}</ColHead>
            ))}
          </ColHeaders>
          <SheetBody>
            <RowHeaders>
              {rowHeights.map((h, i) => (
                <RowHead key={i} $h={h} $sel={i === 0}>{i + 1}</RowHead>
              ))}
            </RowHeaders>
            <Canvas>
              <SelectedCell />
              <NavBar>
                <Logo>
                  <Svg w={25} h={38}>
                    <path d="M3 10c0-5 3-8 9.500-8S22 5 22 10v10c0 4-3 6-3 9H6c0-3-3-5-3-9z" stroke="#fff" strokeWidth="2.6" />
                    <path d="M9 32h7M10 36h5" stroke="#ddd" strokeWidth="2" />
                  </Svg>
                  <LogoName>LUZ</LogoName>
                  <LogoSub>Planilhas<br />Empresariais</LogoSub>
                </Logo>
                <NavItem>GRUPOS DE<br />CONTAS</NavItem>
                <NavItem>LANÇAMENTOS</NavItem>
                <NavItem>CONTROLE<br />FINANCEIRO</NavItem>
                <NavItem>RELATÓRIOS</NavItem>
                <NavItem $active>DASHBOARDS</NavItem>
                <NavItem $w={168}>INSTRUÇÕES</NavItem>
              </NavBar>
              <SubNav>
                <PlayButton>
                  <Svg w={28} h={30}>
                    <circle cx={14} cy={15} r={11.5} stroke="#e63a3a" strokeWidth="3" />
                    <path d="M10.5 8.5L20 15l-9.5 6.5z" fill="#e63a3a" />
                  </Svg>
                </PlayButton>
                <SubItem $w={164} $ml={77}>ANÁLISE MENSAL</SubItem>
                <SubItem $w={162}>ANÁLISE ANUAL</SubItem>
                <SubItem $w={180}>ANÁLISE DE CONTAS</SubItem>
                <SubItem $w={188}>ANÁLISE DE RECEITAS</SubItem>
                <SubItem $w={196}>ANÁLISE DE DESPESAS</SubItem>
                <SubTabActive>PARA ONDE VAI O SEU DINHEIRO</SubTabActive>
              </SubNav>
              <FilterRow>
                <FilterLabel $w={73}>Mês:</FilterLabel>
                <Dropdown $w={222}>
                  <DropValue>Janeiro</DropValue>
                  <DropButton><Caret $s={9} $color="#000" /></DropButton>
                </Dropdown>
                <FilterLabel $w={73} $ml={400}>Conta:</FilterLabel>
                <Dropdown $w={221}>
                  <DropValue>DESPESAS COM LAZER</DropValue>
                  <DropButton><Caret $s={9} $color="#000" /></DropButton>
                </Dropdown>
              </FilterRow>
              <Content>
                <ResultTable>
                  <SectionCell>RECEITAS</SectionCell>
                  <HeadCell>Metas</HeadCell>
                  <HeadCell>Realizado</HeadCell>
                  <HeadCell>Realizado x Meta</HeadCell>
                  <DataRows rows={receitas} />
                  <SectionCell $span={4}>DESPESAS</SectionCell>
                  <DataRows rows={despesas} />
                </ResultTable>
                <ChartBox><Chart /></ChartBox>
              </Content>
            </Canvas>
          </SheetBody>
        </SheetMain>
        <VScroll>
          <ScrollBtn $h={25}><ScrollArrow $up /></ScrollBtn>
          <ScrollBtn $h={872} />
          <ScrollBtn $h={22} $end><ScrollArrow /></ScrollBtn>
        </VScroll>
      </Sheet>

      <TabsRow>
        <TabNav>
          <SideArrow $left $color="#217346" />
          <SideArrow $color="#217346" />
          <span>...</span>
        </TabNav>
        {sheetTabs.map(([label, w]) => <SheetTab key={label} $w={w}>{label}</SheetTab>)}
        <SheetTab $w={79} $active>DASH6</SheetTab>
        <AddRow>
          <span>...</span>
          <Svg w={22} h={22}>
            <circle cx={11} cy={11} r={10} stroke="#777" strokeWidth="1.3" />
            <path d="M11 6v10M6 11h10" stroke="#777" strokeWidth="1.8" />
          </Svg>
          <Grip $w={6}>⋮</Grip>
        </AddRow>
        <HScroll>
          <HBtn><SideArrow $left /></HBtn>
          <HThumb />
          <HBtn $end><SideArrow /></HBtn>
        </HScroll>
      </TabsRow>

      <StatusBar>
        <Ready>Pronto</Ready>
        <Svg w={22} h={24}>
          <rect x={2} y={4} width={19} height={19} fill="#fafafa" stroke="#888" />
          <rect x={6} y={1} width={15} height={6} fill="#666" />
          <circle cx={5} cy={5} r={4.5} fill="#666" />
          {[11, 14, 17, 20].map(y => <path key={y} d={`M6 ${y}h12`} stroke="#888" strokeDasharray="2 1" />)}
        </Svg>
        <ViewGroup>
          <ViewBtn $active>
            <Svg w={22} h={22}>{gridIcon(1, 1, 20, 20, 3, 3, '#8d8d8d', '#b9b9b9')}</Svg>
          </ViewBtn>
          <ViewBtn>
            <Svg w={22} h={22}>
              <rect x={1} y={1} width={20} height={20} stroke="#999" fill="#f7f7f7" />
              <rect x={5} y={3} width={12} height={16} stroke="#888" />
              {[7, 10, 13].map(y => <path key={y} d={`M7 ${y}h8`} stroke="#999" />)}
            </Svg>
          </ViewBtn>
          <ViewBtn>
            <Svg w={22} h={22}>
              <rect x={1} y={1} width={20} height={20} stroke="#999" fill="#f7f7f7" />
              <path d="M8 1v15M15 1v15M1 16h20" stroke="#999" />
            </Svg>
          </ViewBtn>
          <QuickSlot $w={12} $ml={4}>
            <Svg w={12} h={8}><path d="M1 4h7" stroke="#555" strokeWidth="3" /></Svg>
          </QuickSlot>
          <ZoomSlider />
          <Svg w={12} h={12}><path d="M6 1v10M1 6h10" stroke="#555" strokeWidth="1.6" /></Svg>
          <ZoomPct>90%</ZoomPct>
        </ViewGroup>
      </StatusBar>
      <BottomBar />
    </Page>
  );
}
